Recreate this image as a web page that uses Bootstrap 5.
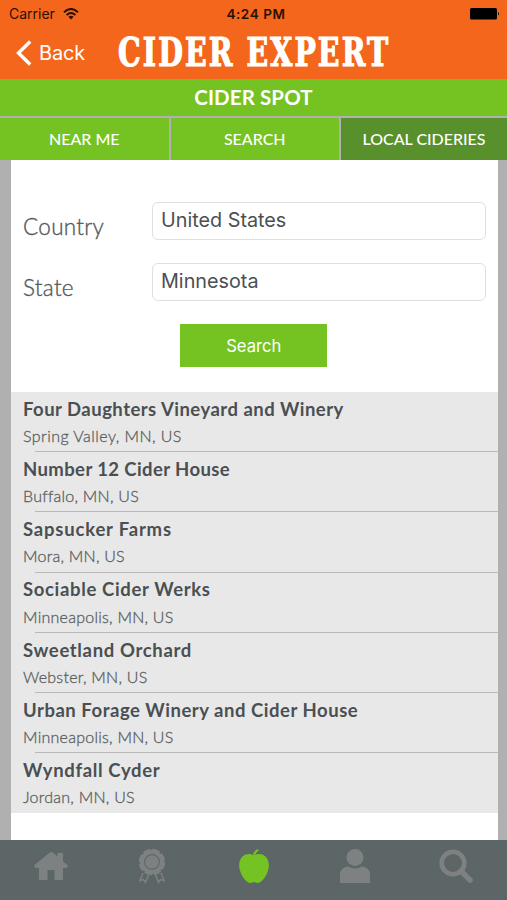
<!DOCTYPE html>
<html lang="en">
<head>
<meta charset="utf-8">
<meta name="viewport" content="width=device-width, initial-scale=1">
<title>Cider Expert</title>
<link href="https://cdn.jsdelivr.net/npm/bootstrap@5.3.0/dist/css/bootstrap.min.css" rel="stylesheet">
<style>
  body { font-family: Lato, "Open Sans", sans-serif; color: #4a4f52; background: #b0b0b0; height: 900px; overflow: hidden; }
  .ios { font-family: Inter, "Liberation Sans", sans-serif; }
  .topbar { background: #f4661b; height: 79px; }
  .status { height: 28px; color: #2b1003; font-size: 14px; line-height: 28px; padding: 0 7px 0 9px; }
  .status .clock { font-weight: 600; font-size: 13.5px; letter-spacing: .6px; margin-left: 2.5px; white-space: nowrap; }
  .titlebar { height: 51px; padding-left: 16px; }
  .back { width: 102px; color: #fff; font-size: 20px; gap: 7px; height: 49px; letter-spacing: -.2px; }
  .spot { background: #75c322; height: 36.5px; color: #fff; font-size: 20.5px; font-weight: 700; line-height: 37px; letter-spacing: .1px; }
  .tabs { display: grid; grid-template-columns: 168.5px 167.5px 1fr; gap: 2.5px; padding-top: 2.5px; height: 44px; }
  .tabs a { background: #75c322; color: #fff; font-size: 16px; line-height: 42px; text-align: center; text-decoration: none; font-weight: 500; }
  .tabs a.current { background: #58912c; }
  .sheet { background: #fff; margin: 0 9.5px 0 11px; height: 680px; }
  .search-form { height: 232px; padding: 42px 12px 0 12px; }
  .field { height: 61px; }
  .field label { flex: 0 0 129px; font-size: 22.5px; line-height: 50px; color: #54595b; font-weight: 300; letter-spacing: .3px; -webkit-text-stroke: .35px #54595b; }
  .field input { height: 38px; border: 1px solid #dfdfdf; border-radius: 6px; font-size: 19.8px; padding: 0 8px 1px; color: #4b4f52; }
  .go { background: #75c322; color: #fff; border-radius: 0; border: 0; width: 147px; height: 43px; font-size: 16.6px; padding: 3px 0 0; margin-right: 1px; }
  .place { height: 60.25px; background: #e8e8e8; padding: 5px 0 0 12px; }
  .place h2 { font-size: 18.5px; font-weight: 700; line-height: 24px; margin: 0; letter-spacing: .65px; }
  .place:nth-child(1) h2 { letter-spacing: .47px; }
  .place:nth-child(6) h2 { letter-spacing: .53px; }
  .place:nth-child(2) h2 { letter-spacing: .4px; }
  .place:nth-child(3) h2 { letter-spacing: .8px; }
  .place p { font-size: 16px; font-weight: 300; line-height: 20px; margin: 5.4px 0 0; color: #5a5f61; letter-spacing: .25px; -webkit-text-stroke: .3px #5a5f61; }
  .place:nth-child(1) p { letter-spacing: .45px; }
  .place hr { margin: 5.2px 0 0 12px; height: 1px; border: 0; background: #b9b9b9; opacity: 1; position: relative; z-index: 1; }
  .place:last-child hr { display: none; }
  .bottom-nav { background: #5d6667; height: 60px; color: #7e8182; }
  .bottom-nav a { color: inherit; padding-bottom: 8px; }
</style>
</head>
<body class="d-flex flex-column">
<header class="topbar flex-shrink-0">
  <div class="status ios d-flex justify-content-between position-relative">
    <span class="d-flex align-items-center">Carrier
      <svg class="ms-2" width="16" height="12" viewBox="0 0 16 12" fill="none" stroke="#2b1003" stroke-width="2"><path d="M1 4.200Q8-2.200 15 4.200M3.600 7Q8 3 12.400 7"/><path d="M8 11.500L5.400 8.800Q8 6.700 10.600 8.800Z" fill="#2b1003" stroke="none"/></svg></span>
    <span class="clock position-absolute start-50 translate-middle-x">4:24 PM</span>
    <svg class="align-self-center" width="30" height="12" viewBox="0 0 30 12"><rect width="27" height="11.500" rx="1.500" fill="#000"/><path d="M28 4Q30 5.700 28 7.600Z"/></svg>
  </div>
  <div class="titlebar d-flex">
    <a class="back ios d-flex align-items-center text-decoration-none" href="#">
      <svg width="16" height="26" viewBox="0 0 16 26" fill="none" stroke="#fff" stroke-width="3.400"><path d="M14.200 1.500L2.500 13L14.200 24.500"/></svg><span>Back</span></a>
    <svg width="300" height="51" viewBox="0 0 300 51" role="img"><text x="0" y="38.500" transform="scale(.74 1)" textLength="365" font-family="DejaVu Serif, serif" font-weight="700" font-size="38.500" fill="#fff" stroke="#fff" stroke-width="1.200">CIDER EXPERT</text></svg>
  </div>
</header>
<h1 class="spot text-center m-0 flex-shrink-0">CIDER SPOT</h1>
<nav class="tabs flex-shrink-0">
  <a href="#">NEAR ME</a><a href="#">SEARCH</a><a class="current" href="#">LOCAL CIDERIES</a>
</nav>
<main class="sheet">
  <form class="search-form">
    <div class="field d-flex"><label for="country">Country</label><input id="country" class="ios form-control" value="United States"></div>
    <div class="field d-flex"><label for="state">State</label><input id="state" class="ios form-control" value="Minnesota"></div>
    <div class="text-center"><button type="button" class="go btn ios">Search</button></div>
  </form>
  <section>
    <article class="place"><h2>Four Daughters Vineyard and Winery</h2><p>Spring Valley, MN, US</p><hr></article>
    <article class="place"><h2>Number 12 Cider House</h2><p>Buffalo, MN, US</p><hr></article>
    <article class="place"><h2>Sapsucker Farms</h2><p>Mora, MN, US</p><hr></article>
    <article class="place"><h2>Sociable Cider Werks</h2><p>Minneapolis, MN, US</p><hr></article>
    <article class="place"><h2>Sweetland Orchard</h2><p>Webster, MN, US</p><hr></article>
    <article class="place"><h2>Urban Forage Winery and Cider House</h2><p>Minneapolis, MN, US</p><hr></article>
    <article class="place"><h2>Wyndfall Cyder</h2><p>Jordan, MN, US</p><hr></article>
  </section>
</main>
<footer class="bottom-nav d-flex flex-shrink-0">
  <a class="w-100 d-flex align-items-center justify-content-center" href="#" aria-label="Home"><svg width="34" height="28" viewBox="0 0 34 28" fill="currentColor"><path d="M15.500 .8L.5 13Q-.5 15 1.500 15.800L5 16V28H13.500V18H20.500V28H29V16L32.500 15.800Q34.500 15 33.500 13L29 9.500V1H23.500V4.500L19 .8Q17-.6 15.500 .8Z"/></svg></a>
  <a class="w-100 d-flex align-items-center justify-content-center" href="#" aria-label="Awards"><svg width="28" height="36" viewBox="0 0 28 36" fill="none" stroke="currentColor"><path d="M5 25L2 32.500L5.500 31.500L7.500 34.500L10.500 27M23 25L26 32.500L22.500 31.500L20.500 34.500L17.500 27" stroke-width="1.500"/><circle cx="14" cy="14" r="11.500" stroke-width="3.600" stroke-dasharray="7.200 1.830"/><circle cx="14" cy="14" r="9.900" stroke-width="4"/><circle cx="14" cy="14" r="6.800" fill="currentColor" stroke="none"/></svg></a>
  <a class="w-100 d-flex align-items-center justify-content-center" href="#" aria-label="Cider spots"><svg width="30" height="34" viewBox="0 0 30 34" fill="#75c322"><path d="M15 6.500C18 4.500 23 4 26.500 7.500C30 11 31 17 28.500 23C26.500 29 22 34 18.500 34C17 34 16 33 15 33C14 33 13 34 11.500 34C8 34 3.500 29 1.500 23C-1 17 0 11 3.500 7.500C7 4 12 4.500 15 6.500Z"/><path d="M14 7Q14 2.500 18.500 0L19.800 1.500Q16.500 3.500 16.300 7Z"/></svg></a>
  <a class="w-100 d-flex align-items-center justify-content-center" href="#" aria-label="Profile"><svg width="30" height="34" viewBox="0 0 30 34" fill="currentColor"><circle cx="15" cy="8.500" r="8.500"/><path d="M0 34V24Q1 18.500 8 17.500Q15 21.500 22 17.500Q29 18.500 30 24V34Z"/></svg></a>
  <a class="w-100 d-flex align-items-center justify-content-center" href="#" aria-label="Search"><svg width="34" height="34" viewBox="0 0 34 34" fill="none" stroke="currentColor"><circle cx="14" cy="14" r="11.300" stroke-width="4.600"/><path d="M22 22L31 31" stroke-width="5.500" stroke-linecap="round"/></svg></a>
</footer>
<script src="https://cdn.jsdelivr.net/npm/bootstrap@5.3.0/dist/js/bootstrap.bundle.min.js"></script>
</body>
</html>
